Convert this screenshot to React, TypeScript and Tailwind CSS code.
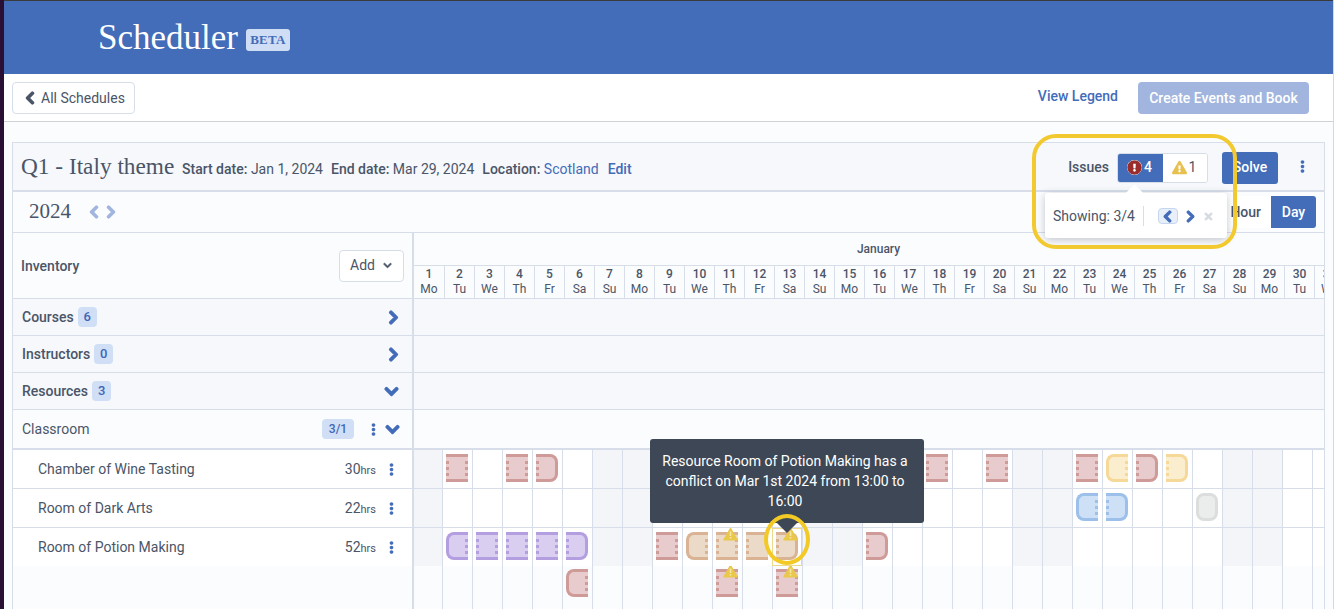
import { FaChevronDown, FaChevronLeft, FaChevronRight, FaEllipsisV, FaExclamationCircle, FaExclamationTriangle, FaTimes } from 'react-icons/fa'

type Tone = 'red' | 'purple' | 'orange' | 'yellow' | 'blue' | 'gray'
type Shape = 'start' | 'mid' | 'end' | 'full' | 'leftDots'
type Booking = { tone: Tone; shape: Shape; warn?: boolean; picked?: boolean }

const tones: Record<Tone, { box: string; dot: string }> = {
  red: { box: 'bg-[#e8cccd] border-[#cf9b99]', dot: 'bg-[#cf9b99]' },
  purple: { box: 'bg-[#d9cdf0] border-[#b39ee0]', dot: 'bg-[#b39ee0]' },
  orange: { box: 'bg-[#ebdac8] border-[#d9b394]', dot: 'bg-[#d9b394]' },
  yellow: { box: 'bg-[#fbeecf] border-[#f6d999]', dot: 'bg-[#f6d999]' },
  blue: { box: 'bg-[#cde0f5] border-[#9cc0ea]', dot: 'bg-[#9cc0ea]' },
  gray: { box: 'bg-[#ebecec] border-[#dcdddd]', dot: 'bg-[#dcdddd]' },
}

const shapes: Record<Shape, string> = {
  start: 'border-y-[3px] border-l-[3px] rounded-l-[8px] justify-end',
  mid: 'border-y-[3px] justify-between',
  end: 'border-y-[3px] border-r-[3px] rounded-r-[8px] justify-start',
  full: 'border-[3px] rounded-[8px]',
  leftDots: 'border-y-[3px] justify-start',
}

const days = ['Mo', 'Tu', 'We', 'Th', 'Fr', 'Sa', 'Su']
const cells = Array.from({ length: 31 }, (_, i) => i)
const weekend = [0, 6, 7, 13, 14, 20, 21, 27, 28]

const chamber: Record<number, Booking> = {
  1: { tone: 'red', shape: 'mid' },
  3: { tone: 'red', shape: 'mid' },
  4: { tone: 'red', shape: 'end' },
  17: { tone: 'red', shape: 'mid' },
  19: { tone: 'red', shape: 'mid' },
  22: { tone: 'red', shape: 'mid' },
  23: { tone: 'yellow', shape: 'start' },
  24: { tone: 'red', shape: 'end' },
  25: { tone: 'yellow', shape: 'end' },
}
const darkArts: Record<number, Booking> = {
  22: { tone: 'blue', shape: 'start' },
  23: { tone: 'blue', shape: 'end' },
  26: { tone: 'gray', shape: 'full' },
}
const potion: Record<number, Booking> = {
  1: { tone: 'purple', shape: 'start' },
  2: { tone: 'purple', shape: 'mid' },
  3: { tone: 'purple', shape: 'mid' },
  4: { tone: 'purple', shape: 'mid' },
  5: { tone: 'purple', shape: 'end' },
  8: { tone: 'red', shape: 'mid' },
  9: { tone: 'orange', shape: 'start' },
  10: { tone: 'orange', shape: 'mid', warn: true },
  11: { tone: 'orange', shape: 'leftDots' },
  12: { tone: 'orange', shape: 'end', warn: true, picked: true },
  15: { tone: 'red', shape: 'end' },
}
const overflow: Record<number, Booking> = {
  5: { tone: 'red', shape: 'start' },
  10: { tone: 'red', shape: 'mid', warn: true },
  12: { tone: 'red', shape: 'mid', warn: true },
}

function Dots({ tone }: { tone: Tone }) {
  return (
    <div className="flex flex-col justify-center gap-[3px] w-[3px] h-full">
      <span className={`h-[3px] w-[3px] ${tones[tone].dot}`} />
      <span className={`h-[3px] w-[3px] ${tones[tone].dot}`} />
      <span className={`h-[3px] w-[3px] ${tones[tone].dot}`} />
    </div>
  )
}

function Warn() {
  return (
    <svg viewBox="0 0 15 14" className="absolute left-[7px] top-[-5px] w-[15px] h-[14px]">
      <path d="M7.5 1 L14.4 13 L0.6 13 Z" fill="#e9c84a" stroke="#e9c84a" strokeWidth="1" strokeLinejoin="round" />
      <rect x="6.7" y="4.5" width="1.6" height="4.5" fill="#f5e6a8" />
      <rect x="6.7" y="10" width="1.6" height="1.6" fill="#f5e6a8" />
    </svg>
  )
}

function Event({ booking }: { booking: Booking }) {
  const { tone, shape } = booking
  return (
    <div className="relative w-[22px] h-[28px]">
      <div className={`flex w-full h-full ${tones[tone].box} ${shapes[shape]}`}>
        {shape === 'end' || shape === 'mid' || shape === 'leftDots' ? <Dots tone={tone} /> : null}
        {shape === 'start' || shape === 'mid' ? <Dots tone={tone} /> : null}
      </div>
      {booking.warn && <Warn />}
    </div>
  )
}

function Track({ items, shaded, height, top }: { items: Record<number, Booking>; shaded: boolean; height: string; top: string }) {
  return (
    <div className={`flex flex-1 overflow-hidden ${height}`}>
      {cells.map((i) => {
        const booking = items[i]
        return (
          <div
            key={i}
            className={`relative shrink-0 h-full border-r border-[#d7deea] pl-[3px] ${top} ${i === 0 ? 'w-[29px]' : 'w-[30px]'} ${
              shaded ? (weekend.includes(i) ? 'bg-[#f3f5f9]' : 'bg-white') : ''
            }`}
          >
            {booking && <Event booking={booking} />}
            {booking?.picked && (
              <div className="absolute left-[-1px] top-0 w-[30px] h-[38px] border border-[#ecd98a]" />
            )}
          </div>
        )
      })}
    </div>
  )
}

function Badge({ children }: { children: string }) {
  return (
    <span className="ml-[4px] inline-flex items-center justify-center h-[20px] min-w-[19px] px-[5px] rounded-[4px] bg-[#d0dff5] text-[13px] font-medium text-[#3f66b5]">
      {children}
    </span>
  )
}

function GroupRow({ label, count, open }: { label: string; count: string; open?: boolean }) {
  return (
    <div className="flex h-[37px] border-b border-[#d7deea] bg-[#f6f8fb]">
      <div className="flex items-center w-[401px] border-r-2 border-[#d7deea] pl-[9px] pr-[13px]">
        <span className="text-[14px] font-medium text-[#4a5568]">{label}</span>
        <Badge>{count}</Badge>
        {open ? (
          <FaChevronDown size={15} strokeWidth={50} stroke="currentColor" className="ml-auto text-[#436cb9]" />
        ) : (
          <FaChevronRight size={15} strokeWidth={50} stroke="currentColor" className="ml-auto -mr-[2px] text-[#436cb9]" />
        )}
      </div>
    </div>
  )
}

function ResourceRow({ name, hours, items, last }: { name: string; hours: string; items: Record<number, Booking>; last?: boolean }) {
  return (
    <div className={`flex ${last ? 'h-[38px]' : 'h-[39px] border-b border-[#d7deea]'}`}>
      <div className="flex items-center w-[401px] shrink-0 border-r-2 border-[#d7deea] bg-white pl-[25px] pr-[14px]">
        <span className="text-[14px] text-[#4a5568]">{name}</span>
        <span className="ml-auto text-[14px] text-[#4a5568]">
          {hours}
          <span className="text-[11px]">hrs</span>
        </span>
        <FaEllipsisV size={13} className="ml-[9px] text-[#436cb9]" />
      </div>
      <Track items={items} shaded height="h-full" top="pt-[4px]" />
    </div>
  )
}

export default function App() {
  return (
    <div className="relative flex w-[1334px] h-[609px] overflow-hidden bg-[#2a0f35] font-['Roboto',sans-serif]">
      <div className="w-[4px] shrink-0" />
      <div className="flex flex-col flex-1 min-w-0 bg-[#fbfcfe] border-r border-[#d5d8dd]">
        <div className="h-[1px] bg-[#3a3a3c]" />
        <header className="flex items-center h-[73px] bg-[#436cb9] pl-[94px]">
          <h1 className="font-['Liberation_Serif',serif] text-[35px] leading-none text-white">Scheduler</h1>
          <span className="ml-[8px] mt-[5px] flex items-center justify-center w-[44px] h-[22px] rounded-[3px] bg-[#d0def5] font-['Liberation_Serif',serif] font-bold text-[13px] tracking-[0.3px] text-[#436cb9]">
            BETA
          </span>
        </header>

        <div className="flex items-center h-[48px] shrink-0 bg-white border-b border-[#cfd2d6] pt-[1px] pl-[8px] pr-[24px]">
          <button className="flex items-center gap-[4px] h-[32px] w-[123px] pl-[10px] rounded-[4px] border border-[#d7deea] text-[14px] text-[#4a5568]">
            <FaChevronLeft size={14} strokeWidth={50} stroke="currentColor" />
            All Schedules
          </button>
          <a className="ml-auto text-[14px] font-medium text-[#436cb9] mb-[4px]">View Legend</a>
          <button className="ml-[20px] h-[32px] w-[171px] rounded-[4px] bg-[#a1b5de] text-[14px] font-medium text-white">
            Create Events and Book
          </button>
        </div>

        <div className="flex-1 min-h-0 pt-[20px] pl-[8px] pr-[8px]">
          <div className="h-full border border-[#d7deea] border-b-0">
            <div className="flex items-center h-[49px] pt-[2px] border-b-2 border-[#d7deea] bg-[#f6f8fb] pl-[8px] pr-[15px]">
              <h2 className="font-['Liberation_Serif',serif] text-[23.3px] leading-none text-[#4a5568] w-[161px] mb-[2px]">Q1 - Italy theme</h2>
              <p className="flex gap-[8px] text-[14px] text-[#4a5568] mt-[3px]">
                <span><b className="font-medium">Start date:</b> Jan 1, 2024</span>
                <span><b className="font-medium">End date:</b> Mar 29, 2024</span>
                <span>
                  <b className="font-medium">Location:</b> <span className="text-[#436cb9]">Scotland</span>
                  <span className="ml-[9px] font-medium text-[#436cb9]">Edit</span>
                </span>
              </p>
              <span className="ml-auto text-[14px] font-medium text-[#4a5568]">Issues</span>
              <div className="ml-[8px] flex h-[30px] w-[91px] rounded-[3px] border border-[#d7deea] overflow-hidden">
                <span className="flex items-center justify-center gap-[2px] w-[45px] pr-[2px] bg-[#436cb9] text-[14px] font-medium text-white">
                  <FaExclamationCircle size={15} className="text-[#9b2c2c] bg-white rounded-full" />4
                </span>
                <span className="flex items-center justify-center gap-[2px] flex-1 pr-[2px] bg-white text-[14px] text-[#4a5568]">
                  <FaExclamationTriangle size={15} className="text-[#e8c04f]" />1
                </span>
              </div>
              <button className="ml-[14px] h-[32px] w-[56px] rounded-[3px] bg-[#436cb9] text-[14px] font-medium text-white">Solve</button>
              <FaEllipsisV size={13} className="ml-[18px] mb-[2px] text-[#436cb9]" />
            </div>

            <div className="flex items-center h-[41px] border-b border-[#d7deea] pl-[16px] pr-[8px]">
              <span className="font-['Liberation_Serif',serif] text-[21px] text-[#4a5568]">2024</span>
              <span className="ml-[16px] flex gap-[3px] text-[#a1b5de]">
                <FaChevronLeft size={14} strokeWidth={50} stroke="currentColor" />
                <FaChevronRight size={14} strokeWidth={50} stroke="currentColor" />
              </span>
              <div className="ml-auto flex h-[32px] rounded-[3px] overflow-hidden">
                <span className="flex items-center pl-[6px] pr-[10px] bg-white text-[14px] font-medium text-[#4a5568]">Hour</span>
                <span className="flex items-center justify-center w-[45px] bg-[#436cb9] text-[14px] font-medium text-white">Day</span>
              </div>
            </div>

            <div className="flex h-[66px] border-b border-[#d7deea]">
              <div className="flex items-center w-[401px] shrink-0 border-r-2 border-[#d7deea] pl-[8px] pr-[8px]">
                <span className="mt-[2px] text-[14px] font-medium text-[#4a5568]">Inventory</span>
                <button className="ml-auto flex items-center gap-[8px] h-[32px] w-[65px] pl-[10px] rounded-[4px] border border-[#d7deea] bg-white text-[14px] text-[#4a5568]">
                  Add
                  <FaChevronDown size={9} strokeWidth={40} stroke="currentColor" />
                </button>
              </div>
              <div className="flex flex-col flex-1 min-w-0">
                <div className="flex items-center justify-center h-[32px] pl-[19px] text-[12px] font-medium text-[#4a5568]">January</div>
                <div className="flex flex-1 overflow-hidden border-t border-[#d7deea]">
                  {cells.map((i) => (
                    <div
                      key={i}
                      className={`flex flex-col items-center shrink-0 border-r border-[#d7deea] pt-[1px] text-[12px] leading-[15px] text-[#4a5568] ${i === 0 ? 'w-[31px]' : 'w-[30px]'}`}
                    >
                      <span className="font-medium">{i + 1}</span>
                      <span>{days[i % 7]}</span>
                    </div>
                  ))}
                </div>
              </div>
            </div>

            <GroupRow label="Courses" count="6" />
            <GroupRow label="Instructors" count="0" />
            <GroupRow label="Resources" count="3" open />

            <div className="flex h-[40px] border-b-2 border-[#d7deea]">
              <div className="flex items-center w-[401px] border-r-2 border-[#d7deea] pl-[9px] pr-[12px]">
                <span className="text-[14px] text-[#4a5568]">Classroom</span>
                <span className="ml-auto flex items-center justify-center w-[32px] h-[20px] rounded-[4px] bg-[#d0dff5] text-[12px] font-medium text-[#3f66b5]">3/1</span>
                <FaEllipsisV size={13} className="ml-[13px] text-[#436cb9]" />
                <FaChevronDown size={15} strokeWidth={50} stroke="currentColor" className="ml-[5px] text-[#436cb9]" />
              </div>
            </div>

            <ResourceRow name="Chamber of Wine Tasting" hours="30" items={chamber} />
            <ResourceRow name="Room of Dark Arts" hours="22" items={darkArts} />
            <ResourceRow name="Room of Potion Making" hours="52" items={potion} last />

            <div className="flex h-[60px]">
              <div className="w-[401px] shrink-0 border-r-2 border-[#d7deea]" />
              <Track items={overflow} shaded={false} height="h-[60px]" top="pt-[3px]" />
            </div>
          </div>
        </div>
      </div>

      {/* tooltip over the timeline */}
      <div className="absolute left-[650px] top-[439px] w-[274px] h-[84px] rounded-[3px] bg-[#3d4755] flex items-center justify-center pl-[10px] pr-[14px] text-center text-[14px] leading-[20px] text-white">
        Resource Room of Potion Making has a conflict on Mar 1st 2024 from 13:00 to 16:00
        <span className="absolute left-[127px] top-[84px] w-0 h-0 border-x-[10px] border-x-transparent border-t-[10px] border-t-[#3d4755]" />
      </div>
      <div className="absolute left-[764px] top-[514px] w-[46px] h-[51px] rounded-[50%] border-[4px] border-[#f2c925]" />

      {/* issue navigator popover */}
      <div className="absolute left-[1045px] top-[193px] flex items-center w-[182px] h-[45px] pt-[1px] rounded-[3px] bg-white pl-[8px] shadow-[0_2px_8px_rgba(60,70,90,0.3)] text-[14px] text-[#4a5568]">
        <span className="absolute left-[83px] top-[-6px] w-[13px] h-[13px] rotate-45 bg-white" />
        <span className="relative">Showing: 3/4</span>
        <span className="ml-[8px] h-[20px] border-l border-[#d7deea]" />
        <span className="ml-[14px] flex items-center justify-center w-[20px] h-[16px] rounded-[4px] border border-[#c5d6f0] bg-[#e8eff9] text-[#436cb9]">
          <FaChevronLeft size={13} strokeWidth={50} stroke="currentColor" />
        </span>
        <FaChevronRight size={13} strokeWidth={50} stroke="currentColor" className="ml-[6px] text-[#436cb9]" />
        <FaTimes size={11} strokeWidth={30} stroke="currentColor" className="ml-[6px] text-[#d5d9e0]" />
      </div>
      <div className="absolute left-[1032px] top-[134px] w-[205px] h-[115px] rounded-[24px] border-[4px] border-[#f2c92f]" />
    </div>
  )
}
